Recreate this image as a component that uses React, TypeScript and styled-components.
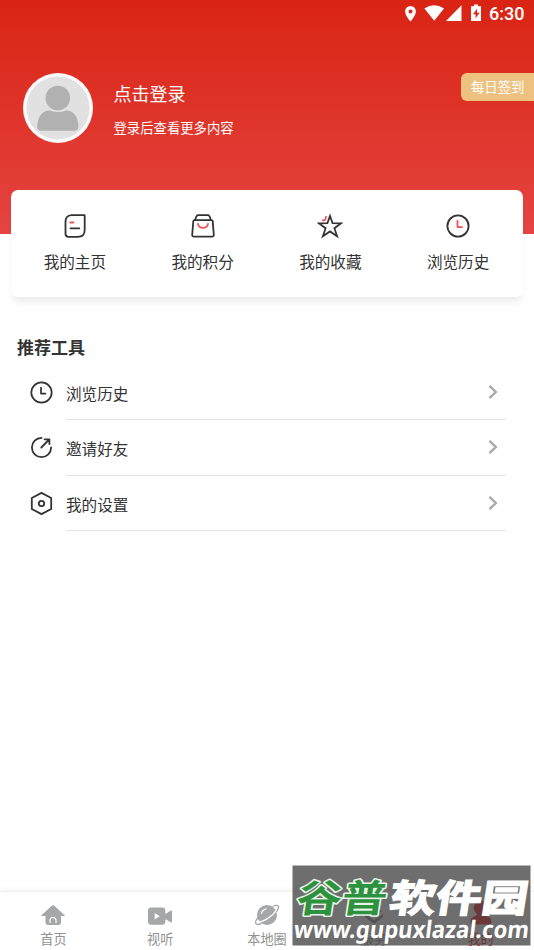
import React from 'react';
import styled, { createGlobalStyle } from 'styled-components';

const GlobalStyle = createGlobalStyle`
  * { box-sizing: border-box; }
  body {
    margin: 0;
    background: #fff;
    font-family: Roboto, "Noto Sans CJK SC", sans-serif;
    color: #333;
  }
`;

const Page = styled.div`
  position: relative;
  display: flex;
  flex-direction: column;
  width: 534px;
  height: 950px;
  overflow: hidden;
  background: #fefefe;
`;

const Header = styled.header`
  flex: none;
  height: 234px;
  background: linear-gradient(#d92413, #e54442);
  color: #fff;
`;

const StatusBar = styled.div`
  display: flex;
  justify-content: flex-end;
  height: 28px;
  padding-right: 9px;
`;

const StatusIcons = styled.svg`
  width: 84px;
  height: 28px;
  margin-right: 3px;
`;

const Time = styled.span`
  width: 36px;
  font-size: 18px;
  font-weight: 500;
  line-height: 28px;
  white-space: nowrap;
`;

const Profile = styled.div`
  display: flex;
  align-items: flex-start;
  padding: 45px 0 0 23px;
`;

const Avatar = styled.svg`
  width: 70px;
  height: 70px;
`;

const ProfileText = styled.div`
  flex: 1;
  padding: 8px 0 0 20.5px;
`;

const LoginTitle = styled.div`
  font-size: 18px;
  line-height: 28px;
`;

const LoginHint = styled.div`
  margin-top: 10px;
  font-size: 13.35px;
  line-height: 20px;
`;

const CheckIn = styled.div`
  width: 73px;
  height: 28px;
  padding: 1px 0 0 10px;
  border-radius: 6px 0 0 6px;
  background: #edc180;
  font-size: 13.35px;
  line-height: 28px;
  white-space: nowrap;
`;

const ShortcutCard = styled.section`
  position: relative;
  flex: none;
  display: grid;
  grid-template-columns: repeat(4, 1fr);
  height: 107px;
  margin: -44px 11px 0;
  padding-right: 1px;
  border-radius: 7px;
  background: #fff;
  box-shadow: 0 7px 6px -2px rgba(0, 0, 0, 0.07);
`;

const Shortcut = styled.div`
  display: flex;
  flex-direction: column;
  align-items: center;
  padding-top: 23px;
  font-size: 15.6px;
  line-height: 24px;
`;

const LineIcon = styled.svg<{ $size: number }>`
  flex: none;
  width: ${(p) => p.$size}px;
  height: ${(p) => p.$size}px;
  fill: none;
  stroke: #333;
  stroke-width: 1.8;
  stroke-linecap: round;
  stroke-linejoin: round;
`;

const ShortcutLabel = styled.span`
  margin-top: 12px;
`;

const Tools = styled.section`
  flex: 1;
  padding: 37px 0 0 17px;
`;

const ToolsTitle = styled.h2`
  margin: 0 0 2.4px;
  font-size: 17px;
  font-weight: 700;
  line-height: 28px;
`;

const ToolRow = styled.div`
  display: flex;
  align-items: center;
  height: 55.7px;
  padding-left: 12px;
`;

const ToolBody = styled.div`
  display: flex;
  align-items: center;
  justify-content: space-between;
  width: 440px;
  height: 100%;
  margin-left: 12px;
  padding-right: 5px;
  border-bottom: 1px solid #e4e4e4;
  font-size: 15.6px;
`;

const ToolLabel = styled.span`
  padding-top: 2px;
`;

const Chevron = styled.svg`
  width: 14px;
  height: 20px;
  fill: none;
  stroke: #aaa;
  stroke-width: 2.4;
`;

const TabBar = styled.nav`
  flex: none;
  display: grid;
  grid-template-columns: repeat(5, 1fr);
  height: 59px;
  border-top: 1px solid #f1f1f1;
  background: #fff;
  box-shadow: 0 -2px 5px rgba(0, 0, 0, 0.035);
`;

const Tab = styled.div<{ $active?: boolean }>`
  display: flex;
  flex-direction: column;
  align-items: center;
  padding-top: 9px;
  color: ${(p) => (p.$active ? '#f03030' : '#929292')};
  font-size: 13.2px;
  line-height: 22px;
  white-space: nowrap;
`;

const TabIcon = styled.svg`
  flex: none;
  width: 28px;
  height: 28px;
  fill: ${(p) => p.color || '#a5a7a9'};
`;

const Watermark = styled.svg`
  position: absolute;
  left: 292px;
  top: 865px;
  width: 239px;
  height: 81px;
`;

const RED = '#ef5158';

const PageIcon = () => (
  <LineIcon $size={26} viewBox="0 0 26 26">
    <path d="M9 2.2h13.7V17q0 6.800-6.800 6.800H6.500q-3 0-3-3V9q0-6.800 6.500-6.800Z" />
    <path d="M8.500 15.300h8.800" />
    <path d="M8.300 9.500h3" stroke={RED} />
  </LineIcon>
);

const BagIcon = () => (
  <LineIcon $size={26} viewBox="0 0 26 26">
    <path d="M4.400 7.200h17.200q1 0 1.100 1l1.100 13.600q.1 1.900-1.800 1.900H4q-1.900 0-1.800-1.900L3.300 8.200q.1-1 1.100-1ZM5.300 7q.9-4.800 2.800-4.800h9.800q1.900 0 2.800 4.800" />
    <path d="M8 10.800q.7 4 5 4t5-4" stroke={RED} />
  </LineIcon>
);

const StarIcon = () => (
  <LineIcon $size={26} viewBox="0 0 26 26">
    <path
      d="M13 3l2.600 7.200 8.400.2-6.600 4.800 2.700 8.100-7.100-4.900-7.100 4.900 2.700-8.100L2 10.400l8.400-.2Z"
      strokeLinejoin="miter"
    />
    <path d="M5.700 7.300h1.600l1-.9.800-2.600" stroke={RED} />
  </LineIcon>
);

const ClockIcon = ({ size, hands }: { size: number; hands?: string }) => (
  <LineIcon $size={size} viewBox="0 0 26 26">
    <circle cx="13" cy="13" r="10.600" />
    <path d="M12.500 8v6.100h4.600" stroke={hands} />
  </LineIcon>
);

const InviteIcon = () => (
  <LineIcon $size={25} viewBox="0 0 25 25">
    <path d="M12.500 2.900a9.600 9.600 0 1 0 9.600 9.600M12.300 12.500l7.900-8M15.600 4.300h4.800v4.800" />
  </LineIcon>
);

const SettingsIcon = () => (
  <LineIcon $size={25} viewBox="0 0 25 25">
    <path d="M12.500 1.900L22.200 7v11l-9.700 5.100L2.800 18V7Z" />
    <circle cx="12.500" cy="12.500" r="2.700" />
  </LineIcon>
);

const shortcuts = [
  { label: '我的主页', icon: <PageIcon /> },
  { label: '我的积分', icon: <BagIcon /> },
  { label: '我的收藏', icon: <StarIcon /> },
  { label: '浏览历史', icon: <ClockIcon size={26} hands={RED} /> },
];

const tools = [
  { label: '浏览历史', icon: <ClockIcon size={25} /> },
  { label: '邀请好友', icon: <InviteIcon /> },
  { label: '我的设置', icon: <SettingsIcon /> },
];

const SiteWatermark = () => (
  <Watermark viewBox="0 0 239 81">
    <rect x="0.500" y="0.500" width="238" height="80" fill="#3c3c3c" fillOpacity="0.74" />
    <g fontFamily="'Noto Sans CJK SC', sans-serif" fontWeight="700" fontSize="38">
      <g transform="translate(3 47) skewX(-9)">
        <text
          textLength="90"
          lengthAdjust="spacingAndGlyphs"
          fill="#2d923e"
          stroke="#e8f4e8"
          strokeWidth="3"
          strokeLinejoin="round"
          paintOrder="stroke"
        >
          谷普
        </text>
        <text
          x="93"
          textLength="138"
          lengthAdjust="spacingAndGlyphs"
          fill="#fff"
          stroke="#fff"
          strokeWidth="1.500"
        >
          软件园
        </text>
      </g>
    </g>
    <text
      transform="translate(1 73) skewX(-7)"
      textLength="235"
      lengthAdjust="spacingAndGlyphs"
      fill="#fff"
      fontFamily="'Noto Sans', 'Open Sans', sans-serif"
      fontWeight="700"
      fontSize="24"
    >
      www.gupuxlazal.com
    </text>
  </Watermark>
);

export default function App() {
  return (
    <>
      <GlobalStyle />
      <Page>
        <Header>
          <StatusBar>
            <StatusIcons viewBox="0 0 84 28" fill="#fff">
              <path
                fillRule="evenodd"
                d="M8.500 6a5.400 5.400 0 0 0-5.400 5.400c0 4 5.400 10.100 5.400 10.100s5.400-6.100 5.400-10.100A5.400 5.400 0 0 0 8.500 6Zm0 3.500a2 2 0 1 1 0 4 2 2 0 0 1 0-4Z"
              />
              <path d="M32.200 20.800L22.400 8.600q9.800-6.800 19.600 0Z" />
              <path d="M59.500 5.300v15.700H44Z" />
              <path
                fillRule="evenodd"
                d="M72 4.500h4v1.800h3V21H69V6.300h3ZM75 8.700l-4 5.500h2.600v4l4-5.500h-2.600Z"
              />
            </StatusIcons>
            <Time>6:30</Time>
          </StatusBar>
          <Profile>
            <Avatar viewBox="0 0 70 70">
              <circle cx="35" cy="35" r="35" fill="#fafafa" />
              <circle cx="35" cy="35" r="31.500" fill="#e1e1e1" />
              <circle cx="34.800" cy="25" r="12.300" fill="#b1b1b1" />
              <path
                d="M27 37.500q8 3 16 0c8.500 0 12.400 7.500 12.400 16.500q0 3.700-3.700 3.700H18q-3.700 0-3.700-3.700c0-9 4.200-16.500 12.700-16.500Z"
                fill="#b1b1b1"
              />
            </Avatar>
            <ProfileText>
              <LoginTitle>点击登录</LoginTitle>
              <LoginHint>登录后查看更多内容</LoginHint>
            </ProfileText>
            <CheckIn>每日签到</CheckIn>
          </Profile>
        </Header>

        <ShortcutCard>
          {shortcuts.map((item) => (
            <Shortcut key={item.label}>
              {item.icon}
              <ShortcutLabel>{item.label}</ShortcutLabel>
            </Shortcut>
          ))}
        </ShortcutCard>

        <Tools>
          <ToolsTitle>推荐工具</ToolsTitle>
          {tools.map((item) => (
            <ToolRow key={item.label}>
              {item.icon}
              <ToolBody>
                <ToolLabel>{item.label}</ToolLabel>
                <Chevron viewBox="0 0 14 20">
                  <path d="M2.500 3.800l6.300 6.200-6.300 6.200" />
                </Chevron>
              </ToolBody>
            </ToolRow>
          ))}
        </Tools>

        <TabBar>
          <Tab>
            <TabIcon viewBox="0 0 28 28">
              <path d="M13 4.600q1-.9 2 0l10.700 9.600q.6.800-.5.800H22v6.300q0 2.700-2.700 2.700H9.200q-2.700 0-2.700-2.700V15H2.900q-1.100 0-.5-.8Z" />
              <path d="M11 22v-2.500q0-3 3-3t3 3V22" fill="none" stroke="#fff" strokeWidth="1.200" />
            </TabIcon>
            首页
          </Tab>
          <Tab>
            <TabIcon viewBox="0 0 28 28">
              <rect x="2" y="6.500" width="17.300" height="17.200" rx="3" />
              <path d="M18.500 12.500h1.800l4-2.700q1.700-.8 1.700 1v9.500q0 1.800-1.700 1l-4-2.700h-1.800Z" />
              <path d="M8.700 12l5 3.300-5 3.300Z" fill="#fff" />
            </TabIcon>
            视听
          </Tab>
          <Tab>
            <TabIcon viewBox="0 0 28 28">
              <circle cx="14" cy="14" r="10" />
              <path
                d="M4.200 21C10 21.500 20 15 23.800 8.500"
                fill="none"
                stroke="#fff"
                strokeWidth="1.300"
              />
              <path
                d="M4.800 16.500C.5 22.500 3 25 8.500 22.300M19.500 5.500C24.500 3 27.800 4.500 23.500 10.800"
                fill="none"
                stroke="#a5a7a9"
                strokeWidth="1.300"
              />
              <path d="M8.300 12.800q.8-4.300 5.200-5" fill="none" stroke="#fff" strokeWidth="1.200" />
            </TabIcon>
            本地圈
          </Tab>
          <Tab>
            <TabIcon viewBox="0 0 28 28" color="#929292">
              <path d="M6 10L14 4l8 6-8 6ZM5 13l9 6 9-6v3l-9 7-9-7Z" />
            </TabIcon>
            服务
          </Tab>
          <Tab $active>
            <TabIcon viewBox="0 0 28 28" color="#f03030">
              <path d="M14 0a7 7 0 0 0-4.300 12.700q.6 1.800-1.700 2.600C4.500 16.300 3.500 18 3.500 21q0 2.500 3 2.500h15q3 0 3-2.500c0-3-1-4.700-4.500-5.700q-2.300-.8-1.700-2.600A7 7 0 0 0 14 0Z" />
            </TabIcon>
            我的
          </Tab>
        </TabBar>
        <SiteWatermark />
      </Page>
    </>
  );
}
